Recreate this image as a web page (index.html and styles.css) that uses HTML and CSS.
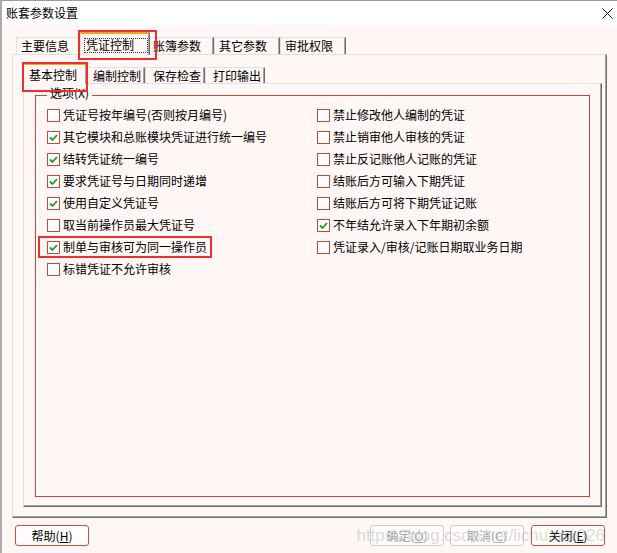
FILE: index.html
```html
<!DOCTYPE html>
<html lang="zh-CN">
<head>
<meta charset="utf-8">
<title>账套参数设置</title>
<link rel="stylesheet" href="styles.css">
</head>
<body>
<div class="window">
  <div class="titlebar">
    <span class="title">账套参数设置</span>
    <svg class="close" width="11" height="11" viewBox="0 0 11 11"><path d="M0.5 0.5 L10.5 10.5 M10.5 0.5 L0.5 10.5" stroke="#111" stroke-width="1" fill="none"/></svg>
  </div>
  <div class="main">
    <div class="tabs tabs-outer">
      <div class="tab">主要信息</div>
      <div class="tab active annotated"><span class="focus">凭证控制</span></div>
      <div class="tab">账簿参数</div>
      <div class="tab">其它参数</div>
      <div class="tab">审批权限</div>
    </div>
    <div class="panel panel-outer">
      <div class="tabs tabs-inner">
        <div class="tab active annotated">基本控制</div>
        <div class="tab">编制控制</div>
        <div class="tab">保存检查</div>
        <div class="tab">打印输出</div>
      </div>
      <div class="panel panel-inner">
        <fieldset class="group">
          <legend>选项(X)</legend>
          <div class="options">
            <label class="opt"><span class="box"></span>凭证号按年编号(否则按月编号)</label>
            <label class="opt"><span class="box"><svg viewBox="0 0 11 11"><path d="M2 5.5 L4.5 8 L9 3" /></svg></span>其它模块和总账模块凭证进行统一编号</label>
            <label class="opt"><span class="box"><svg viewBox="0 0 11 11"><path d="M2 5.5 L4.5 8 L9 3" /></svg></span>结转凭证统一编号</label>
            <label class="opt"><span class="box"><svg viewBox="0 0 11 11"><path d="M2 5.5 L4.5 8 L9 3" /></svg></span>要求凭证号与日期同时递增</label>
            <label class="opt"><span class="box"><svg viewBox="0 0 11 11"><path d="M2 5.5 L4.5 8 L9 3" /></svg></span>使用自定义凭证号</label>
            <label class="opt"><span class="box"></span>取当前操作员最大凭证号</label>
            <label class="opt annotated"><span class="box"><svg viewBox="0 0 11 11"><path d="M2 5.5 L4.5 8 L9 3" /></svg></span>制单与审核可为同一操作员</label>
            <label class="opt"><span class="box"></span>标错凭证不允许审核</label>
            <label class="opt"><span class="box"></span>禁止修改他人编制的凭证</label>
            <label class="opt"><span class="box"></span>禁止销审他人审核的凭证</label>
            <label class="opt"><span class="box"></span>禁止反记账他人记账的凭证</label>
            <label class="opt"><span class="box"></span>结账后方可输入下期凭证</label>
            <label class="opt"><span class="box"></span>结账后方可将下期凭证记账</label>
            <label class="opt"><span class="box"><svg viewBox="0 0 11 11"><path d="M2 5.5 L4.5 8 L9 3" /></svg></span>不年结允许录入下年期初余额</label>
            <label class="opt"><span class="box"></span>凭证录入/审核/记账日期取业务日期</label>
          </div>
        </fieldset>
      </div>
    </div>
    <div class="buttons">
      <div class="btn">帮助(<u>H</u>)</div>
      <div class="btn disabled push">确定(<u>O</u>)</div>
      <div class="btn disabled">取消(<u>C</u>)</div>
      <div class="btn last">关闭(<u>E</u>)</div>
      <span class="watermark">https://blog.csdn.net/lichuan1026</span>
    </div>
  </div>
</div>
</body>
</html>
```

FILE: styles.css
```css
* { box-sizing: border-box; }
html, body { margin: 0; padding: 0; }
body {
  width: 617px;
  height: 553px;
  overflow: hidden;
  background: #fff7f5;
  font-family: "Noto Sans CJK SC", "Noto Sans", sans-serif;
  font-size: 12px;
  line-height: 16px;
  color: #000;
}
.window {
  height: 553px;
  border-left: 2px solid #ababab;
  border-top: 1px solid #9c9c9c;
}
.titlebar {
  height: 24px;
  background: #fff;
  display: flex;
  align-items: center;
  justify-content: space-between;
  padding: 0 4px 0 4px;
}
.title { font-size: 12px; line-height: 16px; }
.close { display: block; margin-top: 1px; }

.main { padding: 0 10px; }

/* tabs */
.tabs {
  display: flex;
  align-items: flex-end;
  position: relative;
  z-index: 1;
  margin-bottom: -1px;
}
.tabs-outer { height: 23px; margin-top: 7px; padding-left: 4px; }
.tabs-inner { height: 21px; padding-left: 2px; flex: none; }
.tab {
  background: #fff7f5;
  border-top: 1px solid #e0e0e0;
  border-left: 1px solid #e0e0e0;
  border-right: 1px solid #6f6f6f;
  box-shadow: inset -1px 0 0 #a3a3a3;
  white-space: nowrap;
  margin-bottom: 1px;
  flex: none;
}
.tabs-outer .tab { width: 66px; height: 17px; padding-left: 4px; line-height: 16px; }
.tabs-inner .tab { width: 60px; height: 16px; padding-left: 7px; line-height: 15px; }
.tab.active {
  border-top: 2px solid #f5a524;
  margin: 0 -2px;
  position: relative;
  z-index: 2;
}
.tabs-outer .tab.active { width: 70px; height: 23px; padding-top: 3px; line-height: 16px; }
.tabs-inner .tab.active { width: 64px; height: 21px; padding-left: 5px; padding-top: 2px; line-height: 16px; }
.focus {
  display: inline-block;
  height: 13px;
  line-height: 12px;
  padding: 0 13px 0 1px;
  outline: 1px dotted #333;
}
.annotated { position: relative; }
.annotated::after {
  content: "";
  position: absolute;
  border: 2px solid #ee2f2f;
  pointer-events: none;
}
.tabs-outer .annotated::after { left: -3px; top: -4px; width: 75px; height: 26px; }
.tabs-inner .annotated::after { left: -2px; top: -3px; width: 62px; height: 26px; }

/* panels */
.panel {
  border-top: 1px solid #e0e0e0;
  border-left: 1px solid #e0e0e0;
  border-right: 1px solid #6f6f6f;
  border-bottom: 1px solid #6f6f6f;
  box-shadow: inset -1px -1px 0 #a3a3a3;
}
.panel-outer {
  height: 464px;
  padding: 8px 4px 10px 10px;
  display: flex;
  flex-direction: column;
}
.panel-inner {
  flex: 1;
  padding: 2px 11px 9px 11px;
  display: flex;
  flex-direction: column;
}

/* group */
.group {
  flex: 1;
  margin: 0;
  min-width: 0;
  border: 1px solid #c9473a;
  padding: 0 0 0 11px;
}
.group legend {
  padding: 0 3px 4px 3px;
  line-height: 14px;
}
.options {
  display: grid;
  grid-template-columns: 270px 1fr;
  grid-template-rows: repeat(8, 22px);
  grid-auto-flow: column;
}
.opt {
  justify-self: start;
  display: flex;
  align-items: center;
  gap: 3px;
  white-space: nowrap;
}
.box {
  flex: none;
  width: 13px;
  height: 13px;
  border: 1px solid #c24a3b;
  background: #fff;
  display: block;
}
.box svg { display: block; width: 11px; height: 11px; }
.box path { fill: none; stroke: #16a11a; stroke-width: 1.8; }
.opt.annotated::after { left: -9px; right: -5px; top: 0; bottom: 0; }

/* buttons */
.buttons {
  position: relative;
  display: flex;
  gap: 6px;
  margin-top: 7px;
  padding: 0 2px 0 3px;
}
.btn {
  width: 74px;
  height: 21px;
  border: 1px solid #c8523e;
  border-radius: 3px;
  background: #fffdfc;
  text-align: center;
  line-height: 19px;
  font-size: 12px;
}
.btn.disabled { border-color: #cfcfcf; color: #aaaaaa; }
.btn.push { margin-left: auto; }
.btn.last { margin-left: 1px; }
.watermark {
  position: absolute;
  right: 2px;
  top: 0;
  font-family: "Liberation Sans", Arial, sans-serif;
  font-size: 17px;
  line-height: 21px;
  color: rgba(150, 150, 150, 0.35);
  white-space: nowrap;
  pointer-events: none;
}
```
